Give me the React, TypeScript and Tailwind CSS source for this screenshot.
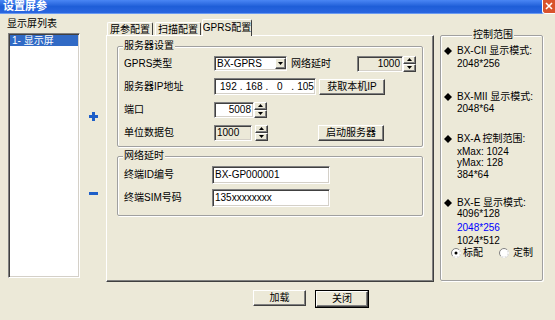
import type React from "react";

const RAISED =
	"border border-t-white border-l-white border-r-[#404040] border-b-[#404040] shadow-[inset_-1px_-1px_0_#808080] bg-[#ECE9D8]";
const SUNKEN =
	"border border-t-[#808080] border-l-[#808080] border-r-white border-b-white shadow-[inset_1px_1px_0_#404040,inset_-1px_-1px_0_#D4D0C8]";
const GROUP =
	"border border-[#A0A0A0] rounded-[2px] shadow-[1px_1px_0_#fff,inset_1px_1px_0_#fff]";

function Arrow({ up }: { up?: boolean }): React.ReactElement {
	return (
		<svg width="5" height="3" viewBox="0 0 5 3" aria-hidden>
			<path d={up ? "M2.5 0 L5 3 L0 3 Z" : "M0 0 L5 0 L2.5 3 Z"} fill="#000" />
		</svg>
	);
}

function Spin(): React.ReactElement {
	return (
		<div className="flex h-[16px] w-[13px] flex-col">
			<div className={`${RAISED} flex h-[8px] items-center justify-center`}>
				<Arrow up />
			</div>
			<div className={`${RAISED} flex h-[8px] items-center justify-center`}>
				<Arrow />
			</div>
		</div>
	);
}

function Button({
	label,
	width,
	dflt,
}: {
	label: string;
	width: string;
	dflt?: boolean;
}): React.ReactElement {
	return (
		<div className={`${dflt ? "border border-black" : ""} ${width}`}>
			<div
				className={`${RAISED} flex h-[16px] items-center justify-center leading-none`}
			>
				{label}
			</div>
		</div>
	);
}

function Diamond(): React.ReactElement {
	return (
		<svg width="8" height="8" viewBox="0 0 8 8" className="mr-[5px] shrink-0" aria-hidden>
			<path d="M4 0 L8 4 L4 8 L0 4 Z" fill="#000" />
		</svg>
	);
}

function Radio({ on }: { on?: boolean }): React.ReactElement {
	return (
		<svg width="10" height="10" viewBox="0 0 10 10" className="shrink-0" aria-hidden>
			<circle cx="5" cy="5" r="4.5" fill="#fff" stroke="#808080" />
			<path d="M1.8 8.2 A4.5 4.5 0 0 0 8.2 1.8" stroke="#fff" fill="none" />
			{on && <circle cx="5" cy="5" r="1.5" fill="#000" />}
		</svg>
	);
}

export default function App(): React.ReactElement {
	return (
		<div className="flex h-[320px] w-[555px] flex-col overflow-hidden whitespace-nowrap bg-[#ECE9D8] text-[10px] text-black [font-family:'Liberation_Sans','Noto_Sans_CJK_SC',sans-serif]">
			{/* title bar */}
			<div className="flex h-[14px] items-center justify-between bg-gradient-to-b from-[#4A86F4] via-[#1E5ED8] to-[#2A66E0] border-b border-[#6A9AF0]">
				<span className="pl-[3px] text-[11px] font-bold leading-[13px] text-white">
					设置屏参
				</span>
				<div className="flex h-[14px] w-[13px] items-center justify-center rounded-bl-[3px] border-l border-b border-white bg-[#D9532C]">
					<svg width="8" height="8" viewBox="0 0 8 8" aria-hidden>
						<path d="M1 1 L7 7 M7 1 L1 7" stroke="#fff" strokeWidth="1.6" />
					</svg>
				</div>
			</div>

			<div className="flex h-[268px]">
				{/* left list */}
				<div className="ml-[8px] flex w-[72px] flex-col">
					<div className="h-[19px] pt-[4px] leading-[12px] -ml-px">显示屏列表</div>
					<div className={`${SUNKEN} h-[245px] bg-white p-[1px]`}>
						<div className="h-[11px] bg-[#316AC5] pl-[2px] leading-[11px] text-white">
							1- 显示屏
						</div>
					</div>
				</div>

				{/* add / remove */}
				<div className="flex w-[26px] flex-col items-center pt-[98px]">
					<svg width="9" height="9" viewBox="0 0 9 9" aria-hidden>
						<path d="M3 0 H6 V3 H9 V6 H6 V9 H3 V6 H0 V3 H3 Z" fill="#1E5FC8" />
					</svg>
					<svg width="9" height="3" viewBox="0 0 9 3" className="mt-[71px]" aria-hidden>
						<rect width="9" height="3" fill="#1E5FC8" />
					</svg>
				</div>

				{/* tabs */}
				<div className="flex w-[328px] flex-col pt-[5px]">
					<div className="flex h-[16px] items-end pl-[1px]">
						<div className="flex h-[13px] w-[46px] items-center justify-center rounded-t-[2px] border-l border-t border-r border-l-white border-t-white border-r-[#404040]">
							屏参配置
						</div>
						<div className="ml-[2px] flex h-[13px] w-[46px] items-center justify-center rounded-t-[2px] border-l border-t border-r border-l-white border-t-white border-r-[#404040]">
							扫描配置
						</div>
						<div className="relative -mb-px ml-[1px] flex h-[17px] w-[50px] items-center justify-center rounded-t-[2px] border-l border-t border-r border-l-white border-t-white border-r-[#404040] bg-[#ECE9D8] pb-[2px]">
							GPRS配置
						</div>
					</div>
					<div className="flex h-[247px] flex-col border border-t-white border-l-white border-r-[#404040] border-b-[#404040] shadow-[inset_-1px_-1px_0_#808080] px-[10px] pt-[10px]">
						{/* 服务器设置 */}
						<div className={`${GROUP} flex flex-col pb-[2px]`}>
							<span className="-mt-[7px] ml-[5px] self-start bg-[#ECE9D8] px-[1px] leading-[12px]">
								服务器设置
							</span>
							<div className="flex h-[23px] items-center pl-[6px]">
								<span className="w-[90px]">GPRS类型</span>
								<div className={`${SUNKEN} flex h-[15px] w-[73px] items-center bg-white`}>
									<span className="flex-1 pl-[2px] leading-none">BX-GPRS</span>
									<div className={`${RAISED} flex h-[11px] w-[11px] items-center justify-center`}>
										<Arrow />
									</div>
								</div>
								<span className="ml-[4px] w-[66px]">网络延时</span>
								<div className={`${SUNKEN} flex h-[16px] w-[46px] items-center justify-end pr-[2px] leading-none`}>
									1000
								</div>
								<Spin />
							</div>
							<div className="flex h-[23px] items-center pl-[6px]">
								<span className="w-[90px]">服务器IP地址</span>
								<div className={`${SUNKEN} flex h-[17px] w-[102px] items-center bg-white pl-[4px] leading-none`}>
									<span className="w-[19px] text-center">192</span>
									<span className="w-[7px] text-center">.</span>
									<span className="w-[19px] text-center">168</span>
									<span className="w-[7px] text-center">.</span>
									<span className="w-[19px] text-center">0</span>
									<span className="w-[7px] text-center">.</span>
									<span className="w-[19px] text-center">105</span>
								</div>
								<div className="ml-[3px]">
									<Button label="获取本机IP" width="w-[66px]" />
								</div>
							</div>
							<div className="flex h-[23px] items-center pl-[6px]">
								<span className="w-[90px]">端口</span>
								<div className={`${SUNKEN} flex h-[16px] w-[40px] items-center justify-end bg-white pr-[2px] leading-none`}>
									5008
								</div>
								<Spin />
							</div>
							<div className="flex h-[23px] items-center pl-[6px]">
								<span className="w-[90px]">单位数据包</span>
								<div className={`${SUNKEN} flex h-[16px] w-[38px] items-center pl-[2px] leading-none`}>
									1000
								</div>
								<div className="ml-[3px]">
									<Spin />
								</div>
								<div className="ml-[50px]">
									<Button label="启动服务器" width="w-[66px]" />
								</div>
							</div>
						</div>

						{/* 网络延时 */}
						<div className={`${GROUP} mt-[9px] flex flex-col pt-[3px] pb-[6px]`}>
							<span className="-mt-[10px] mb-[1px] ml-[5px] self-start bg-[#ECE9D8] px-[1px] leading-[12px]">
								网络延时
							</span>
							<div className="flex h-[23px] items-center pl-[6px]">
								<span className="w-[88px]">终端ID编号</span>
								<div className={`${SUNKEN} flex h-[18px] w-[118px] items-center bg-white pl-[2px] leading-none`}>
									BX-GP000001
								</div>
							</div>
							<div className="flex h-[23px] items-center pl-[6px]">
								<span className="w-[88px]">终端SIM号码</span>
								<div className={`${SUNKEN} flex h-[18px] w-[118px] items-center bg-white pl-[2px] leading-none`}>
									135xxxxxxxx
								</div>
							</div>
						</div>
					</div>
				</div>

				{/* 控制范围 */}
				<div className={`${GROUP} ml-[6px] mt-[21px] flex h-[246px] w-[103px] flex-col pl-[3px]`}>
					<span className="-mt-[7px] self-center bg-[#ECE9D8] px-[1px] leading-[12px]">
						控制范围
					</span>
					<div className="mt-[4px] flex h-[12px] items-center leading-[12px]">
						<Diamond />
						BX-CII 显示模式:
					</div>
					<div className="mt-[1px] h-[12px] pl-[13px] leading-[12px]">2048*256</div>
					<div className="mt-[21px] flex h-[12px] items-center leading-[12px]">
						<Diamond />
						BX-MII 显示模式:
					</div>
					<div className="h-[12px] pl-[13px] leading-[12px]">2048*64</div>
					<div className="mt-[18px] flex h-[12px] items-center leading-[12px]">
						<Diamond />
						BX-A 控制范围:
					</div>
					<div className="mt-[1px] h-[11px] pl-[13px] leading-[11px]">xMax: 1024</div>
					<div className="h-[11px] pl-[13px] leading-[11px]">yMax: 128</div>
					<div className="mt-[1px] h-[12px] pl-[13px] leading-[12px]">384*64</div>
					<div className="mt-[16px] flex h-[11px] items-center leading-[11px]">
						<Diamond />
						BX-E 显示模式:
					</div>
					<div className="h-[12px] pl-[13px] leading-[12px]">4096*128</div>
					<div className="mt-[2px] h-[12px] pl-[13px] leading-[12px] text-[#0000FF]">2048*256</div>
					<div className="mt-[1px] h-[12px] pl-[13px] leading-[12px]">1024*512</div>
					<div className="flex h-[12px] items-center pl-[7px] leading-[12px]">
						<Radio on />
						<span className="ml-[2px] w-[36px]">标配</span>
						<Radio />
						<span className="ml-[4px]">定制</span>
					</div>
				</div>
			</div>

			{/* bottom buttons */}
			<div className="flex gap-[9px] pl-[253px] pt-[8px]">
				<Button label="加载" width="w-[53px]" />
				<Button label="关闭" width="w-[54px]" dflt />
			</div>
		</div>
	);
}
